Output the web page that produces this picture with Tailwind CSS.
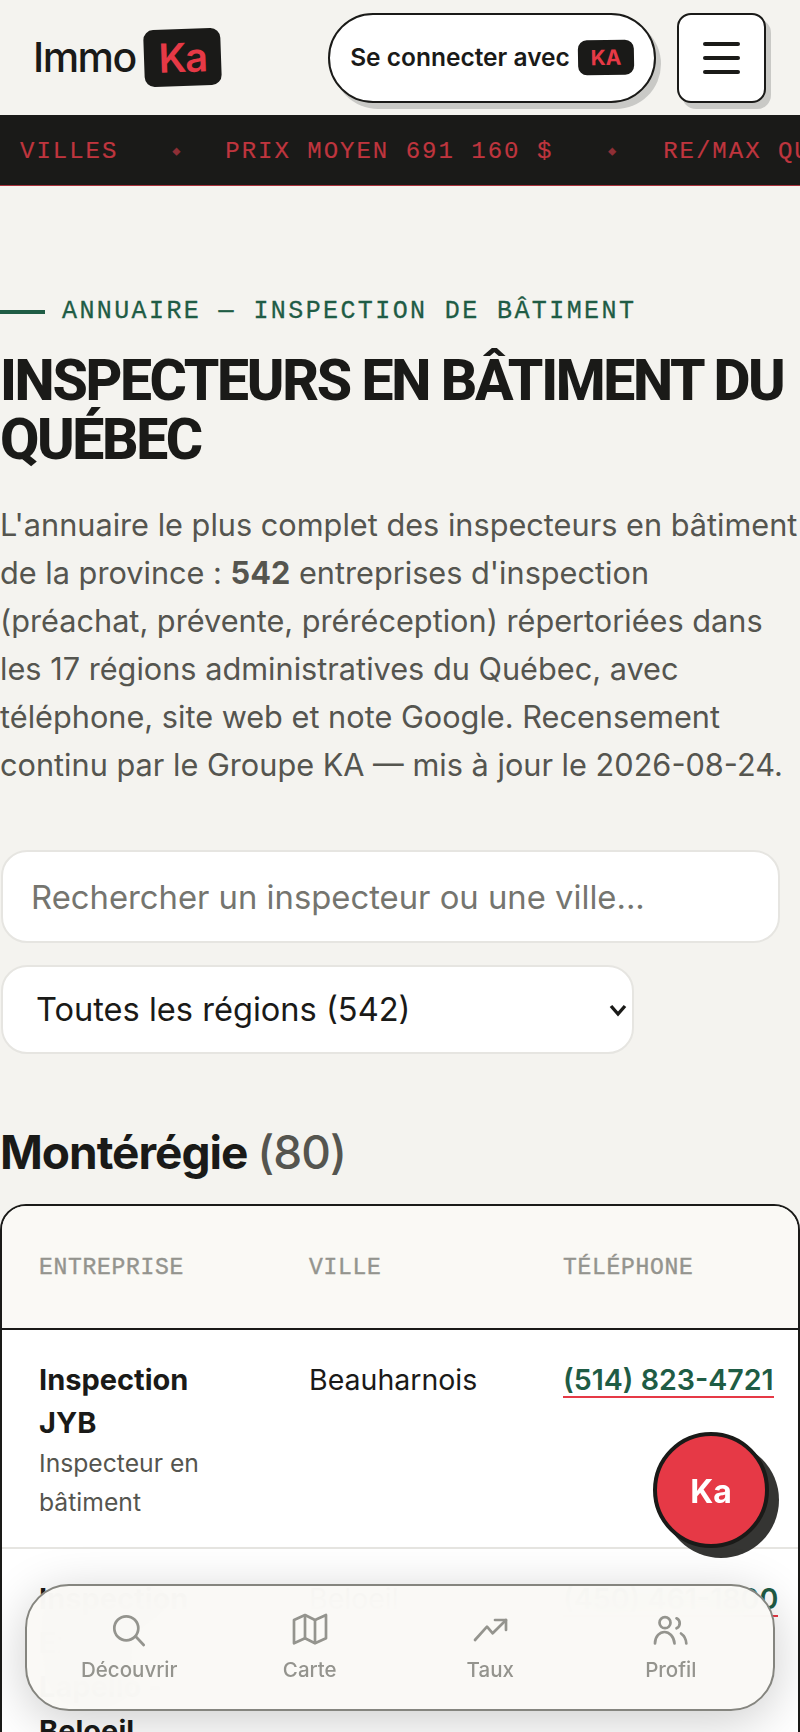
<!DOCTYPE html>
<html lang="fr">
<head>
  <meta charset="UTF-8">
  <meta name="viewport" content="width=device-width, initial-scale=1.0">
  <title>Inspecteurs en bâtiment du Québec</title>
  <script src="https://cdn.jsdelivr.net/npm/@tailwindcss/browser@4"></script>
</head>
<body class="bg-[#f4f3ef] text-[#1a1a18] font-['Inter',sans-serif] h-[1732px] overflow-hidden">

  <!-- Header -->
  <header class="h-[115px] flex items-center pl-[33px] pr-[34px]">
    <a class="flex items-center gap-2 text-[41px] font-medium tracking-[-1.5px]">
      <span>Immo</span>
      <span class="w-[77px] h-[57px] bg-[#1a1a18] text-[#e63946] rounded-[10px] -rotate-2 flex items-center justify-center text-[40px] font-semibold">Ka</span>
    </a>
    <button class="ml-auto w-[328px] h-[90px] bg-white border-2 border-[#1a1a18] rounded-full shadow-[5px_6px_0_#c9c9c6] flex items-center justify-center gap-2 text-[24.5px] font-semibold">
      <span>Se connecter avec</span>
      <span class="w-[56px] h-[35px] bg-[#1a1a18] text-[#e63946] rounded-[9px] -rotate-1 flex items-center justify-center text-[21px] font-bold">KA</span>
    </button>
    <button class="ml-[21px] w-[89px] h-[90px] bg-white border-2 border-[#1a1a18] rounded-[14px] shadow-[5px_6px_0_#c9c9c6] flex flex-col items-center justify-center gap-[10px]">
      <span class="w-[37px] h-1 bg-[#1a1a18] rounded-full"></span>
      <span class="w-[37px] h-1 bg-[#1a1a18] rounded-full"></span>
      <span class="w-[37px] h-1 bg-[#1a1a18] rounded-full"></span>
    </button>
  </header>

  <!-- Ticker -->
  <div class="h-[71px] bg-[#1a1a18] border-b border-[#a8323c] flex items-center whitespace-nowrap overflow-hidden pl-5 pt-[3px] font-['Liberation_Mono',monospace] text-[24px] tracking-[2px] [-webkit-text-stroke:0.2px] text-[#bf353e]">
    <span>VILLES</span>
    <span class="ml-[54px] mr-[43px] text-[13px] text-[#8f2f36]">◆</span>
    <span>PRIX MOYEN 691 160 $</span>
    <span class="ml-[55px] mr-[45px] text-[13px] text-[#8f2f36]">◆</span>
    <span>RE/MAX QUÉBEC</span>
  </div>

  <main class="pt-[112px]">
    <!-- Titre -->
    <div class="flex items-center gap-[17px] h-7">
      <span class="w-[45px] h-1 bg-[#1f5c45]"></span>
      <span class="font-['Liberation_Mono',monospace] text-[25px] tracking-[2.4px] [-webkit-text-stroke:0.3px] text-[#1f5c45] whitespace-nowrap">ANNUAIRE — INSPECTION DE BÂTIMENT</span>
    </div>
    <h1 class="mt-[25px] font-['Roboto',sans-serif] text-[57px] leading-[59px] font-extrabold tracking-[-2.35px] whitespace-nowrap">INSPECTEURS EN BÂTIMENT DU<br>QUÉBEC</h1>
    <p class="mt-[32px] text-[30.7px] leading-[48px] text-[#55554f] whitespace-nowrap">L'annuaire le plus complet des inspecteurs en bâtiment<br>de la province : <strong class="font-bold">542</strong> entreprises d'inspection<br>(préachat, prévente, préréception) répertoriées dans<br>les 17 régions administratives du Québec, avec<br>téléphone, site web et note Google. Recensement<br>continu par le Groupe KA — mis à jour le 2026-08-24.</p>

    <!-- Filtres -->
    <input class="block mt-[61px] ml-[1px] w-[779px] h-[93px] bg-white border-2 border-[#e6e5e1] rounded-[26px] px-[28px] text-[32.8px] placeholder:text-[#75756f] outline-none" placeholder="Rechercher un inspecteur ou une ville...">
    <div class="relative mt-[22px] ml-[1px] w-[633px]">
      <select class="block w-full h-[89px] appearance-none bg-white border-2 border-[#e6e5e1] rounded-[26px] px-[33px] text-[32.6px] outline-none">
        <option>Toutes les régions (542)</option>
      </select>
      <svg class="absolute right-[7px] top-[36px] w-[18px] h-[18px]" viewBox="0 0 18 18" fill="none" stroke="#1a1a18" stroke-width="3.4"><path d="m2 5 7 8 7-8"/></svg>
    </div>

    <h2 class="mt-[68px] text-[46px] leading-[60px] font-bold tracking-[-1px]">Montérégie <span class="font-medium text-[#55554f]">(80)</span></h2>

    <!-- Tableau -->
    <div class="mt-[22px] w-[800px] border-2 border-[#1a1a18] rounded-[26px] overflow-hidden bg-white">
      <div class="h-[124px] bg-[#faf9f5] border-b-2 border-[#1a1a18] grid grid-cols-[270px_254px_1fr] items-center pl-[37px] pt-[3px] font-['Liberation_Mono',monospace] text-[23px] tracking-[0.7px] [-webkit-text-stroke:0.4px] text-[#94948e]">
        <span>ENTREPRISE</span>
        <span>VILLE</span>
        <span>TÉLÉPHONE</span>
      </div>
      <div class="h-[219px] border-b-2 border-[#e6e5e1] grid grid-cols-[270px_254px_1fr] items-start pl-[37px] pt-[28px]">
        <div>
          <div class="text-[29px] leading-[43px] font-bold">Inspection<br>JYB</div>
          <div class="text-[24.7px] leading-[39px] text-[#55554f]">Inspecteur en<br>bâtiment</div>
        </div>
        <div class="text-[28.5px] leading-[43px]">Beauharnois</div>
        <div class="pt-[6px]"><a class="text-[28.6px] leading-[32px] font-semibold text-[#1f5c45] border-b-2 border-[#e63946] inline-block whitespace-nowrap">(514) 823-4721</a></div>
      </div>
      <div class="grid grid-cols-[270px_254px_1fr] items-start pl-[37px] pt-[28px] pb-10">
        <div class="text-[29px] leading-[44px] font-bold">Inspection<br>Expert<br>Lapello -<br>Beloeil</div>
        <div class="text-[28.5px] leading-[43px]">Beloeil</div>
        <div class="pt-[6px]"><a class="text-[28.6px] leading-[32px] font-semibold text-[#1f5c45] border-b-2 border-[#e63946] inline-block whitespace-nowrap">(450) 461-1800</a></div>
      </div>
    </div>
  </main>

  <!-- Bouton flottant -->
  <button class="fixed left-[653px] top-[1432px] w-[116px] h-[116px] rounded-full bg-[#e63946] border-[4px] border-[#1a1a18] shadow-[10px_10px_0_#353533] text-white text-[32px] font-bold flex items-center justify-center pt-1">Ka</button>

  <!-- Navigation -->
  <nav class="fixed left-[25px] top-[1584px] w-[750px] h-[127px] rounded-[44px] border-2 border-[#85857f] bg-[#faf9f6]/[0.97] backdrop-blur-xl shadow-[0_10px_50px_rgba(0,0,0,0.2)] grid grid-cols-4 pt-[24px] px-[12px] text-[#94948e]">
    <a class="flex flex-col items-center gap-[5px] text-[20.5px] font-medium">
      <svg class="w-10 h-10" viewBox="0 0 40 40" fill="none" stroke="currentColor" stroke-width="2.7" stroke-linecap="round" stroke-linejoin="round"><circle cx="17.3" cy="18.3" r="12"/><path d="m26.7 26.5 8 8.5"/></svg>
      <span>Découvrir</span>
    </a>
    <a class="flex flex-col items-center gap-[5px] text-[20.5px] font-medium">
      <svg class="w-10 h-10" viewBox="0 0 40 40" fill="none" stroke="currentColor" stroke-width="2.7" stroke-linejoin="round"><path d="M4 10 15 5l10 5 11-5v23.3l-11 5-10-5-11 5z"/><path d="M15 5v23.3"/><path d="M25 10v23.3"/></svg>
      <span>Carte</span>
    </a>
    <a class="flex flex-col items-center gap-[5px] text-[20.5px] font-medium">
      <svg class="w-10 h-10" viewBox="0 0 40 40" fill="none" stroke="currentColor" stroke-width="2.7" stroke-linecap="round" stroke-linejoin="round"><path d="M5 30 17 16.7l5.7 6.6L36 10"/><path d="M25 10h11v10"/></svg>
      <span>Taux</span>
    </a>
    <a class="flex flex-col items-center gap-[5px] text-[20.5px] font-medium">
      <svg class="w-10 h-10" viewBox="0 0 40 40" fill="none" stroke="currentColor" stroke-width="2.7" stroke-linecap="round" stroke-linejoin="round"><circle cx="14" cy="12.7" r="5.5"/><path d="M4 33.5C4 26 9 22 13.5 22S23 26 23.5 33.5"/><path d="M25.5 8.3a5.5 5.5 0 0 1 0 10"/><path d="M30 23.5c3 2 5 5.500 5.300 10"/></svg>
      <span>Profil</span>
    </a>
  </nav>
</body>
</html>
